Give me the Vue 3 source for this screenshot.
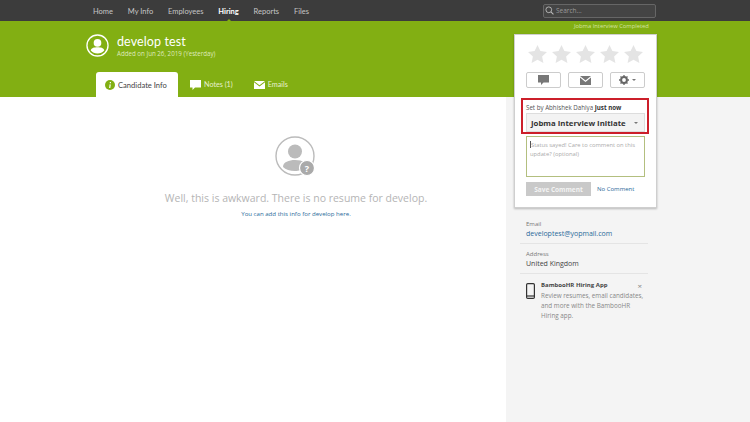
<script setup>
const navItems = [
  { label: "Home" },
  { label: "My Info" },
  { label: "Employees" },
  { label: "Hiring", active: true },
  { label: "Reports" },
  { label: "Files" },
];
const stars = [1, 2, 3, 4, 5];
</script>

<template>
  <div class="page">
    <nav class="topbar">
      <ul class="nav-list">
        <li v-for="item in navItems" :key="item.label" :class="{ active: item.active }">{{ item.label }}</li>
      </ul>
      <div class="search">
        <svg width="9" height="9" viewBox="0 0 10 10">
          <circle cx="4.2" cy="4.2" r="3.2" fill="none" stroke="#bbb" stroke-width="1" />
          <path d="M6.6 6.6 9.4 9.4" stroke="#bbb" stroke-width="1.2" />
        </svg>
        <span>Search...</span>
      </div>
    </nav>

    <header class="banner">
      <div class="person">
        <svg class="avatar" width="23" height="23" viewBox="0 0 24 24">
          <circle cx="12" cy="12" r="11" fill="none" stroke="#fff" stroke-width="1.4" />
          <circle cx="12" cy="9.3" r="4" fill="#fff" />
          <path d="M5 17.2c0-2.600 3.400-3.400 7-3.400s7 .8 7 3.400c-1.600 2-4.200 3.200-7 3.200s-5.400-1.200-7-3.200z" fill="#fff" />
        </svg>
        <div>
          <h1>develop test</h1>
          <p>Added on Jun 26, 2019 (Yesterday)</p>
        </div>
      </div>
      <div class="tabs">
        <div class="tab current">
          <svg width="10" height="10" viewBox="0 0 10 10">
            <circle cx="5" cy="5" r="5" fill="#82af13" />
            <path d="M5.400 2v1.200M5.200 4.400 4.700 8" stroke="#fff" stroke-width="1.200" />
          </svg>
          Candidate Info
        </div>
        <div class="tab">
          <svg width="11" height="10" viewBox="0 0 11 10">
            <path d="M0 0h11v7.500H5L2.500 10V7.500H0z" fill="#fff" />
          </svg>
          Notes (1)
        </div>
        <div class="tab">
          <svg width="11" height="8" viewBox="0 0 11 8">
            <path d="M0 0h11L5.500 4.200z M0 1.200 5.500 5.400 11 1.200V8H0z" fill="#fff" />
          </svg>
          Emails
        </div>
      </div>
    </header>

    <div class="body">
      <main class="empty">
        <svg class="empty-icon" width="42" height="42" viewBox="0 0 42 42">
          <circle cx="20" cy="20" r="19" fill="none" stroke="#bbb" stroke-width="1.400" />
          <circle cx="20" cy="15.500" r="7" fill="#bbb" />
          <path d="M8 31c0-5 6-7 12-7 4 0 7 .8 9 2-3 1-4 4-3.500 8-2 .7-3.500 1-5.500 1-5 0-9.500-1.500-12-4z" fill="#bbb" />
          <circle cx="32" cy="32" r="7.500" fill="#aaa" stroke="#fff" stroke-width="1.200" />
          <text x="32" y="35.500" class="help-mark">?</text>
        </svg>
        <h2>Well, this is awkward. There is no resume for develop.</h2>
        <a>You can add this info for develop here.</a>
      </main>

      <aside class="side">
        <p class="status-over">Jobma Interview Completed</p>
        <section class="card">
          <div class="stars">
            <svg v-for="n in stars" :key="n" width="19" height="18" viewBox="0 0 19 18">
              <path d="M9.500 0l2.900 6.100 6.600.8-4.900 4.500 1.300 6.600-5.900-3.300L3.600 18l1.300-6.600L0 6.900l6.600-.8z" fill="#e4e4e4" />
            </svg>
          </div>
          <div class="actions">
            <button>
              <svg width="11" height="10" viewBox="0 0 11 10"><path d="M0 0h11v7.500H5.500L3 10V7.500H0z" fill="#777" /></svg>
            </button>
            <button>
              <svg width="11" height="9" viewBox="0 0 11 9"><path d="M0 0h11L5.500 4.500z M0 1.500 5.500 6 11 1.500V9H0z" fill="#777" /></svg>
            </button>
            <button>
              <svg width="10" height="10" viewBox="0 0 10 10">
                <circle cx="5" cy="5" r="2.900" fill="none" stroke="#666" stroke-width="2" />
                <path d="M5 0v10M0 5h10M1.500 1.500l7 7M8.500 1.500l-7 7" stroke="#666" stroke-width="1.300" stroke-dasharray="1.600 6.800 1.600" />
              </svg>
              <i class="caret"></i>
            </button>
          </div>
          <div class="status-box">
            <p class="set-by">Set by Abhishek Dahiya <b>Just now</b></p>
            <div class="select">
              <span>Jobma Interview Initiate</span>
              <i class="caret"></i>
            </div>
          </div>
          <div class="comment"><span class="cursor"></span>Status sayed! Care to comment on this update? (optional)</div>
          <div class="comment-actions">
            <button class="save">Save Comment</button>
            <a>No Comment</a>
          </div>
        </section>

        <div class="info first">
          <label>Email</label>
          <a>developtest@yopmail.com</a>
        </div>
        <div class="info">
          <label>Address</label>
          <span>United Kingdom</span>
        </div>
        <div class="promo">
          <svg class="phone" width="9" height="16" viewBox="0 0 9 16">
            <rect x=".6" y=".6" width="7.800" height="14.800" rx="1.200" fill="none" stroke="#333" stroke-width="1.200" />
            <path d="M.6 13h7.800" stroke="#333" stroke-width="1.200" />
          </svg>
          <div class="promo-text">
            <div class="promo-head"><b>BambooHR Hiring App</b><span class="close">×</span></div>
            <p>Review resumes, email candidates, and more with the BambooHR Hiring app.</p>
          </div>
        </div>
      </aside>
    </div>
  </div>
</template>

<style>
html,
body {
  margin: 0;
  background: #fff;
}
</style>

<style scoped>
.page {
  width: 750px;
  height: 422px;
  overflow: hidden;
  font-family: "Open Sans", "Liberation Sans", sans-serif;
  display: flex;
  flex-direction: column;
}
.topbar {
  height: 21px;
  background: #3c3c3c;
  display: flex;
  align-items: center;
  justify-content: space-between;
  padding: 0 94px 0 93px;
  flex: none;
}
.nav-list {
  display: flex;
  gap: 14.800px;
  list-style: none;
  margin: 1px 0 0;
  padding: 0;
  font-family: Lato, sans-serif;
  font-size: 7.500px;
  color: #c6c6c6;
}
.nav-list .active {
  color: #fff;
  font-weight: 700;
  position: relative;
}
.nav-list .active::after {
  content: "";
  position: absolute;
  left: 50%;
  bottom: -6px;
  margin-left: -3px;
  border: 3px solid transparent;
  border-top: 0;
  border-bottom-color: #82af13;
}
.search {
  width: 113px;
  height: 14px;
  box-sizing: border-box;
  border: 1px solid #666;
  border-radius: 2px;
  background: #444;
  display: flex;
  align-items: center;
  gap: 2px;
  padding-left: 1px;
  font-size: 6.500px;
  color: #999;
}
.banner {
  height: 76px;
  background: #82af13;
  padding-left: 86px;
  display: flex;
  flex-direction: column;
  flex: none;
}
.person {
  display: flex;
  gap: 8px;
  margin-top: 13px;
  color: #fff;
}
h1 {
  margin: 0;
  font-family: Lato, sans-serif;
  font-size: 12.500px;
  font-weight: 400;
  letter-spacing: .1px;
  line-height: 15px;
}
.person p {
  margin: 0;
  font-size: 6.200px;
  line-height: 9px;
  color: #dfeabd;
}
.tabs {
  display: flex;
  margin: auto 0 0 10px;
  font-family: Lato, sans-serif;
  font-size: 7.200px;
  color: #e8f0d0;
}
.tab {
  height: 25px;
  display: flex;
  align-items: center;
  gap: 3px;
  padding: 0 9px 0 12px;
}
.tab.current {
  background: #fff;
  border-radius: 3px 3px 0 0;
  color: #444;
  padding: 0 9px;
  width: 82px;
  box-sizing: border-box;
  font-size: 7.600px;
}
.body {
  flex: 1;
  display: flex;
  min-height: 0;
}
.empty {
  width: 506px;
  display: flex;
  flex-direction: column;
  align-items: center;
  padding: 39px 0 0 86px;
  box-sizing: border-box;
}
.help-mark {
  font-size: 9px;
  font-weight: 700;
  fill: #fff;
  text-anchor: middle;
}
h2 {
  margin: 13px 0 0;
  font-size: 10.500px;
  line-height: 14px;
  font-weight: 400;
  color: #b5b5b5;
  white-space: nowrap;
}
.empty a {
  margin-top: 4px;
  font-size: 6.100px;
  color: #2a6a9a;
}
.side {
  width: 244px;
  background: #f4f4f4;
  padding: 0 0 0 8px;
  box-sizing: border-box;
  font-size: 7px;
  color: #444;
}
.status-over {
  margin: -78px 0 0;
  height: 15px;
  padding-left: 60px;
  font-size: 5.800px;
  line-height: 15px;
  color: #d5e4a5;
}
.card {
  width: 143px;
  height: 174px;
  box-sizing: border-box;
  background: #fff;
  border: 1px solid #cfcfcf;
  box-shadow: 0 1px 2px rgba(0, 0, 0, .25);
  padding: 9px 11px 0;
}
.stars {
  display: flex;
  justify-content: space-between;
  padding: 1px 2px 0;
}
.actions {
  display: flex;
  justify-content: space-between;
  margin-top: 9px;
}
.actions button {
  width: 35px;
  height: 16px;
  padding: 0;
  border: 1px solid #ccc;
  border-radius: 2px;
  background: #fff;
  display: flex;
  align-items: center;
  justify-content: center;
  gap: 3px;
}
.caret {
  width: 0;
  height: 0;
  border: 2px solid transparent;
  border-bottom: 0;
  border-top-color: #777;
}
.status-box {
  margin: 10px -4px 0 -5px;
  border: 2px solid #cc1f2a;
  height: 36px;
  box-sizing: border-box;
  padding: 3px 2px 0 3px;
}
.set-by {
  margin: 0 0 1px;
  font-size: 6.200px;
  line-height: 9px;
  color: #555;
}
.set-by b {
  color: #333;
}
.select {
  height: 19px;
  box-sizing: border-box;
  background: #f3f3f3;
  border: 1px solid #ddd;
  display: flex;
  align-items: center;
  justify-content: space-between;
  padding: 0 6px 0 4px;
  font-size: 7.800px;
  font-weight: 700;
  color: #333;
  white-space: nowrap;
}
.comment {
  height: 41px;
  margin-top: 2px;
  box-sizing: border-box;
  border: 1px solid #b3bf7f;
  padding: 4px 3px;
  font-size: 5.800px;
  line-height: 9px;
  color: #aaa;
}
.cursor {
  display: inline-block;
  width: 1px;
  height: 7px;
  background: #555;
  vertical-align: -1px;
}
.comment-actions {
  display: flex;
  align-items: center;
  gap: 6px;
  margin-top: 5px;
}
.save {
  width: 65px;
  height: 14px;
  padding: 0;
  border: 0;
  background: #c9c9c9;
  color: #f4f4f4;
  font: 700 6.500px "Open Sans", sans-serif;
}
.comment-actions a {
  font-size: 6px;
  color: #2a6a9a;
}
.info {
  width: 122px;
  margin: 5px 0 0 6px;
  padding: 0 0 4px 6px;
  display: flex;
  flex-direction: column;
  line-height: 10px;
  border-bottom: 1px solid #e4e4e4;
}
.info.first {
  margin-top: 11px;
}
.info label {
  font-size: 6px;
  color: #777;
}
.info a {
  color: #2a6a9a;
}
.promo {
  display: flex;
  gap: 6px;
  margin: 7px 0 0 12px;
  width: 118px;
}
.phone {
  margin-top: 2px;
  flex: none;
}
.promo-text {
  flex: 1;
}
.promo-head {
  display: flex;
  justify-content: space-between;
  font-size: 6px;
  line-height: 9px;
  color: #444;
}
.close {
  color: #888;
  font-size: 8px;
  margin-right: 2px;
}
.promo p {
  margin: 1px 0 0;
  font-size: 6.300px;
  line-height: 10px;
  color: #888;
}
</style>
